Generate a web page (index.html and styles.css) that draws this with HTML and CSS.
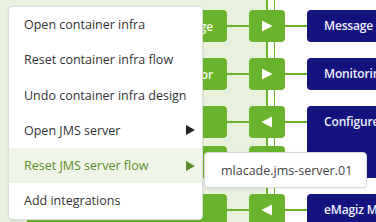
FILE: index.html
```html
<!DOCTYPE html>
<html>
<head>
<meta charset="utf-8">
<link rel="stylesheet" href="styles.css">
</head>
<body>
<div class="diagram">
  <div class="grid">
    <div class="node a r1"><span class="label">Message</span></div>
    <div class="node b r1"><svg class="ico" width="12" height="12" viewBox="0 0 12 12"><polygon points="1,0.5 11.5,6 1,11.5"/></svg></div>
    <div class="node c r1">Message bus</div>

    <div class="node a r2"><span class="label">Monitor</span></div>
    <div class="node b r2"><svg class="ico" width="12" height="12" viewBox="0 0 12 12"><polygon points="1,0.5 11.5,6 1,11.5"/></svg></div>
    <div class="node c r2">Monitoring</div>

    <div class="node a r3"></div>
    <div class="node b r3"><svg class="ico" width="12" height="12" viewBox="0 0 12 12"><polygon points="11,0.5 0.5,6 11,11.5"/></svg></div>
    <div class="node c r3 tall">Configure</div>

    <div class="node a r3b"></div>
    <div class="node b r3b"><svg class="ico" width="12" height="12" viewBox="0 0 12 12"><polygon points="11,0.5 0.5,6 11,11.5"/></svg></div>

    <div class="node a r4"></div>
    <div class="node b r4"><svg class="ico" width="12" height="12" viewBox="0 0 12 12"><polygon points="11,0.5 0.5,6 11,11.5"/></svg></div>
    <div class="node c r4">eMagiz Monitoring</div>
  </div>

  <ul class="menu">
    <li class="item">Open container infra</li>
    <li class="item">Reset container infra flow</li>
    <li class="item">Undo container infra design</li>
    <li class="item">Open JMS server<svg class="arrow" width="9" height="10" viewBox="0 0 9 10"><polygon points="0,0 9,5 0,10"/></svg></li>
    <li class="item active">Reset JMS server flow<svg class="arrow" width="9" height="10" viewBox="0 0 9 10"><polygon points="0,0 9,5 0,10"/></svg></li>
    <li class="item">Add integrations</li>
  </ul>

  <div class="submenu">mlacade.jms-server.01</div>
</div>
</body>
</html>
```

FILE: styles.css
```css
html, body {
  margin: 0;
  padding: 0;
}
body {
  width: 376px;
  height: 222px;
  overflow: hidden;
  font-family: "Open Sans", "Noto Sans", sans-serif;
}
.diagram {
  position: relative;
  width: 376px;
  height: 222px;
  overflow: hidden;
  background: linear-gradient(to right,
    #e8f0de 0 266px,
    #6ab42d 266px 267.5px,
    #ffffff 267.5px 273.5px,
    #6ab42d 273.5px 275px,
    #ffffff 275px);
}
.grid {
  display: grid;
  padding: 10px 0 0 27px;
  grid-template-columns: 200px 36px 120px;
  grid-template-rows: 32px 16px 32px 16px 32px 8px 32px 16px 32px;
  column-gap: 22px;
  width: 420px;
}
.node {
  position: relative;
  border-radius: 4px;
  box-sizing: border-box;
}
.a { grid-column: 1; background: #6ab42d; }
.b { grid-column: 2; background: #6ab42d; display: flex; align-items: center; justify-content: center; }
.c { grid-column: 3; background: #13137f; }
.r1 { grid-row: 1; }
.r2 { grid-row: 3; }
.r3 { grid-row: 5; }
.r3b { grid-row: 7; }
.r4 { grid-row: 9; }
.c.tall { grid-row: 5 / 8; }

.a::after, .b::after {
  content: "";
  position: absolute;
  left: 100%;
  top: 15px;
  width: 22px;
  height: 1.5px;
  background: #6ab42d;
}
.a {
  display: flex;
  justify-content: flex-end;
  align-items: center;
  padding-right: 14px;
}
.label, .c {
  font-weight: 600;
  font-size: 12px;
  letter-spacing: -0.15px;
}
.label { color: #f6fbef; }
.c {
  color: #f0f0fa;
  padding-left: 17px;
  line-height: 32px;
  white-space: nowrap;
}
.ico { fill: #ffffff; display: block; }

.menu {
  position: absolute;
  left: 8px;
  top: 6px;
  width: 195px;
  margin: 0;
  padding: 0;
  list-style: none;
  background: #ffffff;
  border: 1px solid #dcdcdc;
  border-radius: 4px;
  box-sizing: border-box;
  box-shadow: 0 1px 3px rgba(0,0,0,0.08);
  overflow: hidden;
}
.item {
  height: 35.25px;
  display: flex;
  align-items: center;
  justify-content: space-between;
  padding: 0 7px 0 15px;
  font-size: 12.5px;
  color: #333333;
  white-space: nowrap;
}
.item.active {
  background: #eef4e6;
  color: #5d8e2c;
}
.arrow { fill: #222222; display: block; }
.item.active .arrow { fill: #5d8e2c; }

.submenu {
  position: absolute;
  left: 204px;
  top: 152px;
  width: 163px;
  height: 36px;
  box-sizing: border-box;
  background: #ffffff;
  border: 1px solid #d9d9d9;
  border-radius: 4px;
  box-shadow: 0 1px 3px rgba(0,0,0,0.08);
  padding-left: 16px;
  display: flex;
  align-items: center;
  font-size: 12.5px;
  color: #444444;
}
```
